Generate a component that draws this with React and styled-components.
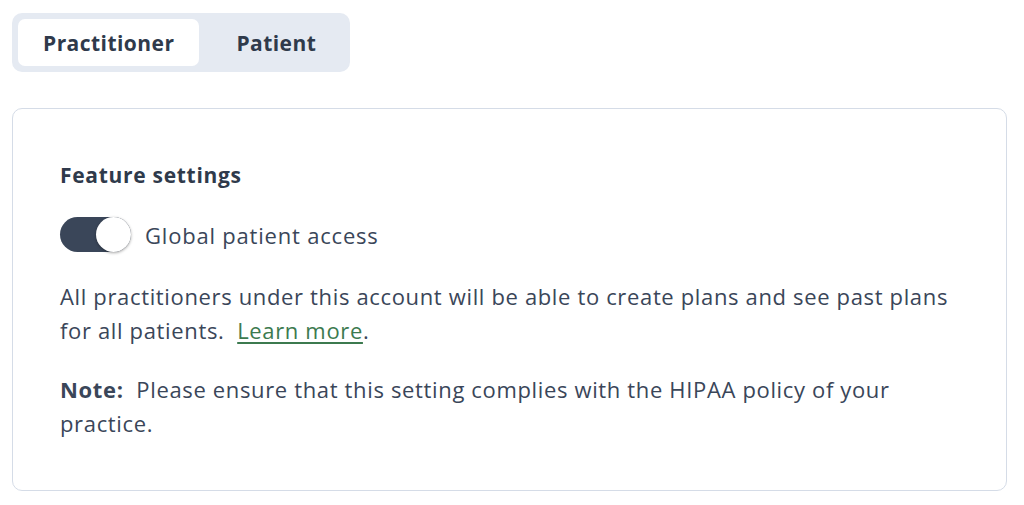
import React, { useState } from 'react'
import styled, { createGlobalStyle } from 'styled-components'

const GlobalStyle = createGlobalStyle`
  body {
    margin: 0;
    background: #ffffff;
    font-family: 'Open Sans', 'Lato', sans-serif;
    color: #3a4659;
  }
`

const Page = styled.div`
  padding: 13px 17px 0 12px;
`

const Tabs = styled.div`
  display: inline-flex;
  padding: 6px;
  background: #e5eaf2;
  border-radius: 10px;
`

const Tab = styled.button`
  border: none;
  background: ${p => (p.active ? '#ffffff' : 'transparent')};
  border-radius: 7px;
  height: 47px;
  padding: 0 ${p => (p.active ? '25px' : '28px')} 0 ${p => (p.active ? '25px' : '37px')};
  font-family: inherit;
  font-size: 21px;
  font-weight: 700;
  letter-spacing: 0.45px;
  color: #2f3a4b;
  cursor: pointer;
`

const Card = styled.div`
  margin-top: 36px;
  border: 1.5px solid #d5dce7;
  border-radius: 10px;
  padding: 51px 40px 42px 47px;
  height: 383px;
  box-sizing: border-box;
`

const Heading = styled.h3`
  margin: 0;
  font-size: 21px;
  font-weight: 700;
  letter-spacing: 0.7px;
  line-height: 30px;
  color: #2f3a4b;
`

const ToggleRow = styled.label`
  display: flex;
  align-items: center;
  gap: 14px;
  margin-top: 27px;
  font-size: 22px;
  letter-spacing: 0.8px;
  cursor: pointer;
`

const Track = styled.span`
  position: relative;
  width: 71px;
  height: 35px;
  border-radius: 18px;
  background: ${p => (p.on ? '#3a4659' : '#c7ced9')};
  flex-shrink: 0;
`

const Knob = styled.span`
  position: absolute;
  top: 0;
  left: ${p => (p.on ? '36px' : '0')};
  width: 35px;
  height: 35px;
  border-radius: 50%;
  background: #ffffff;
  box-shadow: 0 1px 3px rgba(0, 0, 0, 0.35);
`

const Text = styled.p`
  margin: ${p => p.mt || '0'} 0 0;
  font-size: 22px;
  letter-spacing: 0.65px;
  line-height: 34px;
  color: #3a4659;
`

const Link = styled.a`
  color: #3c7a4f;
  text-decoration: underline;
  text-underline-offset: 3px;
`

const App = () => {
  const [tab, setTab] = useState('practitioner')
  const [on, setOn] = useState(true)

  return (
    <Page>
      <GlobalStyle />
      <Tabs>
        <Tab active={tab === 'practitioner'} onClick={() => setTab('practitioner')}>
          Practitioner
        </Tab>
        <Tab active={tab === 'patient'} onClick={() => setTab('patient')}>
          Patient
        </Tab>
      </Tabs>
      <Card>
        <Heading>Feature settings</Heading>
        <ToggleRow onClick={() => setOn(!on)}>
          <Track on={on}>
            <Knob on={on} />
          </Track>
          Global patient access
        </ToggleRow>
        <Text mt='27px'>
          All practitioners under this account will be able to create plans and see past plans
          for all patients.&nbsp; <Link href='#'>Learn more</Link>.
        </Text>
        <Text mt='25px'>
          <strong>Note:</strong>&nbsp; Please ensure that this setting complies with the HIPAA
          policy of your practice.
        </Text>
      </Card>
    </Page>
  )
}

export default App
